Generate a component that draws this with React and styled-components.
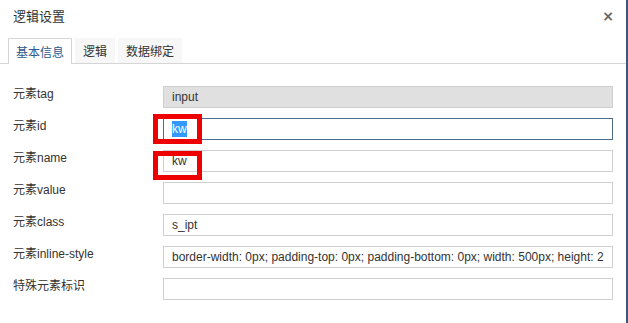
import React from 'react';
import styled, { createGlobalStyle } from 'styled-components';

const Global = createGlobalStyle`
  html, body { margin: 0; padding: 0; background: #fff; }
  body { font-family: "Liberation Sans", Arial, "Noto Sans CJK SC", sans-serif; font-size: 12px; color: #333; }
`;

const Dialog = styled.div`
  position: relative;
  width: 626px;
  height: 323px;
  border-right: 2px solid #3b5878;
  background: #fff;
  overflow: hidden;
`;

const Header = styled.div`
  display: flex;
  align-items: center;
  justify-content: space-between;
  height: 30px;
  padding: 0 13px 0 13px;
`;

const Title = styled.div`
  font-size: 13px;
  color: #333;
  margin-top: 1px;
`;

const Close = styled.span`
  font-size: 14px;
  font-weight: bold;
  color: #666;
  margin-top: 2px;
  margin-right: -1px;
  font-family: "DejaVu Sans", sans-serif;
`;

const Tabs = styled.div`
  display: flex;
  gap: 3px;
  padding: 8px 0 0 8px;
  border-bottom: 1px solid #d5d5d5;
  height: 25px;
`;

const Tab = styled.div`
  display: flex;
  align-items: center;
  padding: 0 7px;
  height: ${(p) => (p.$active ? 26 : 25)}px;
  box-sizing: border-box;
  font-size: 12px;
  color: ${(p) => (p.$active ? '#2f5a8c' : '#333')};
  background: ${(p) => (p.$active ? '#fff' : '#f7f7f7')};
  border: 1px solid ${(p) => (p.$active ? '#d5d5d5' : '#f7f7f7')};
  border-bottom: ${(p) => (p.$active ? 'none' : '1px solid #f7f7f7')};
`;

const Form = styled.div`
  display: flex;
  flex-direction: column;
  gap: 10px;
  padding: 22px 0 0 13px;
`;

const Row = styled.div`
  display: grid;
  grid-template-columns: 150px 450px;
  align-items: start;
`;

const Label = styled.div`
  font-size: 12px;
  line-height: 14px;
  padding-top: 1px;
  color: #333;
  white-space: nowrap;
`;

const Field = styled.div`
  box-sizing: border-box;
  height: 22px;
  padding: 0 8px;
  display: flex;
  align-items: center;
  font-size: 12px;
  color: #333;
  white-space: nowrap;
  overflow: hidden;
  background: ${(p) => (p.$disabled ? '#e0e0e0' : '#fff')};
  border: 1px solid ${(p) => (p.$focus ? '#4d6b8c' : '#cfcfcf')};
`;

const Selected = styled.span`
  background: #3399ff;
  color: #fff;
  padding: 1px 0;
`;

const Mark = styled.div`
  position: absolute;
  left: 153px;
  width: 49px;
  height: ${(p) => p.$h}px;
  top: ${(p) => p.$top}px;
  box-sizing: border-box;
  border: 5px solid #ee0000;
`;

const rows = [
  { label: '元素tag', value: 'input', disabled: true },
  { label: '元素id', value: 'kw', focus: true, selected: true },
  { label: '元素name', value: 'kw' },
  { label: '元素value', value: '' },
  { label: '元素class', value: 's_ipt' },
  {
    label: '元素inline-style',
    value: 'border-width: 0px; padding-top: 0px; padding-bottom: 0px; width: 500px; height: 2',
  },
  { label: '特殊元素标识', value: '' },
];

export default function App() {
  return (
    <Dialog>
      <Global />
      <Header>
        <Title>逻辑设置</Title>
        <Close>×</Close>
      </Header>
      <Tabs>
        <Tab $active>基本信息</Tab>
        <Tab>逻辑</Tab>
        <Tab>数据绑定</Tab>
      </Tabs>
      <Form>
        {rows.map((r) => (
          <Row key={r.label}>
            <Label>{r.label}</Label>
            <Field $disabled={r.disabled} $focus={r.focus}>
              {r.selected ? <Selected>{r.value}</Selected> : r.value}
            </Field>
          </Row>
        ))}
      </Form>
      <Mark $top={114} $h={30} />
      <Mark $top={151} $h={29} />
    </Dialog>
  );
}
